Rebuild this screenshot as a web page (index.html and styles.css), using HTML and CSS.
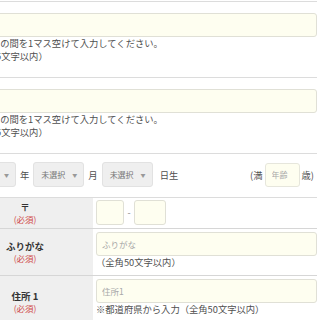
FILE: index.html
```html
<!DOCTYPE html>
<html lang="ja">
<head>
<meta charset="utf-8">
<link rel="stylesheet" href="styles.css">
</head>
<body>
<div class="page">
  <div class="rule-top"></div>
  <div class="name-row">
    <input class="text-input" type="text">
    <p class="note">※姓と名の間を1マス空けて入力してください。<br>（全角25文字以内）</p>
  </div>
  <div class="name-row">
    <input class="text-input" type="text">
    <p class="note">※姓と名の間を1マス空けて入力してください。<br>（全角25文字以内）</p>
  </div>
  <div class="birth-row">
    <span class="select"><span>1990</span><span class="arrow">▼</span></span>
    <span class="unit">年</span>
    <span class="select"><span>未選択</span><span class="arrow">▼</span></span>
    <span class="unit">月</span>
    <span class="select"><span>未選択</span><span class="arrow">▼</span></span>
    <span class="unit unit-day">日生</span>
    <span class="age">
      <span class="unit">(満</span>
      <input class="age-input" type="text" placeholder="年齢">
      <span class="unit">歳)</span>
    </span>
  </div>
  <div class="trow zip-row">
    <div class="th"><span>〒</span><span class="req">(必須)</span></div>
    <div class="td zip-cell">
      <input class="zip zip1" type="text">
      <span class="dash">-</span>
      <input class="zip zip2" type="text">
    </div>
  </div>
  <div class="trow">
    <div class="th"><span>ふりがな</span><span class="req">(必須)</span></div>
    <div class="td">
      <input class="text-input small" type="text" placeholder="ふりがな">
      <p class="note">（全角50文字以内）</p>
    </div>
  </div>
  <div class="trow addr-row">
    <div class="th"><span>住所 1</span><span class="req">(必須)</span></div>
    <div class="td">
      <input class="text-input small" type="text" placeholder="住所1">
      <p class="note">※都道府県から入力（全角50文字以内）</p>
    </div>
  </div>
</div>
</body>
</html>
```

FILE: styles.css
```css
* { box-sizing: border-box; margin: 0; padding: 0; }
html, body { background: #fff; }
body {
  margin: 0;
  width: 320px;
  height: 320px;
  overflow: hidden;
  font-family: "Noto Sans CJK JP", "Noto Sans", sans-serif;
  color: #555;
}
.page { margin-left: -43px; width: 360px; }
.rule-top { height: 1px; margin-top: 1px; background: #dcdcdc; }
.name-row {
  padding: 11px 0 15px 6px;
  border-bottom: 1px solid #dcdcdc;
}
.text-input {
  display: block;
  width: 100%;
  height: 24px;
  border: 1px solid #e0e0d6;
  border-radius: 3px;
  background: #fefef0;
  font-family: inherit;
  font-size: 8.5px;
  padding-left: 5px;
  color: #555;
  outline: none;
}
.text-input::placeholder, .age-input::placeholder { color: #a8a8a8; }
.note {
  font-size: 9.3px;
  line-height: 12.5px;
  color: #4f4f4f;
  white-space: nowrap;
}
.birth-row {
  display: flex;
  align-items: center;
  gap: 4px;
  padding: 8px 3px 10px 8px;
  border-bottom: 1px solid #dcdcdc;
}
.select {
  width: 51px;
  height: 25px;
  flex: none;
  display: flex;
  align-items: center;
  justify-content: space-between;
  padding: 0 6px 0 7px;
  background: #efefef;
  border: 1px solid #e2e2e2;
  border-radius: 3px;
  font-size: 8px;
  color: #777;
}
.arrow { font-size: 5px; color: #999; }
.unit { font-size: 9.3px; color: #4f4f4f; white-space: nowrap; }
.unit-day { margin-left: 3px; }
.age { margin-left: auto; display: flex; align-items: center; gap: 2px; }
.age-input {
  width: 35px;
  height: 24px;
  border: 1px solid #e6e6dc;
  border-radius: 3px;
  background: #fefef0;
  font-family: inherit;
  font-size: 8px;
  padding-left: 6px;
  outline: none;
}
.trow {
  display: flex;
  border-bottom: 1px solid #d6d6d6;
}
.th {
  width: 136px;
  flex: none;
  background: #efefef;
  display: flex;
  flex-direction: column;
  align-items: center;
  justify-content: center;
  font-size: 9.5px;
  line-height: 12px;
  font-weight: bold;
  color: #333;
}
.th span { display: block; line-height: 12px; }
.req { color: #cf4a4a; font-weight: normal; font-size: 8.5px; }
.td { flex: 1; padding: 3px 0 6px 3px; }
.zip-row .td { padding: 2px 0 3px 3px; }
.zip-cell { display: flex; align-items: center; }
.zip {
  height: 25px;
  border: 1px solid #e0e0d6;
  border-radius: 3px;
  background: #fefef0;
  outline: none;
}
.zip1 { width: 28px; }
.zip2 { width: 32px; }
.dash { width: 10px; text-align: center; font-size: 9px; color: #888; }
.addr-row .td { padding-bottom: 20px; }
.addr-row .th { padding-bottom: 6px; }
```
